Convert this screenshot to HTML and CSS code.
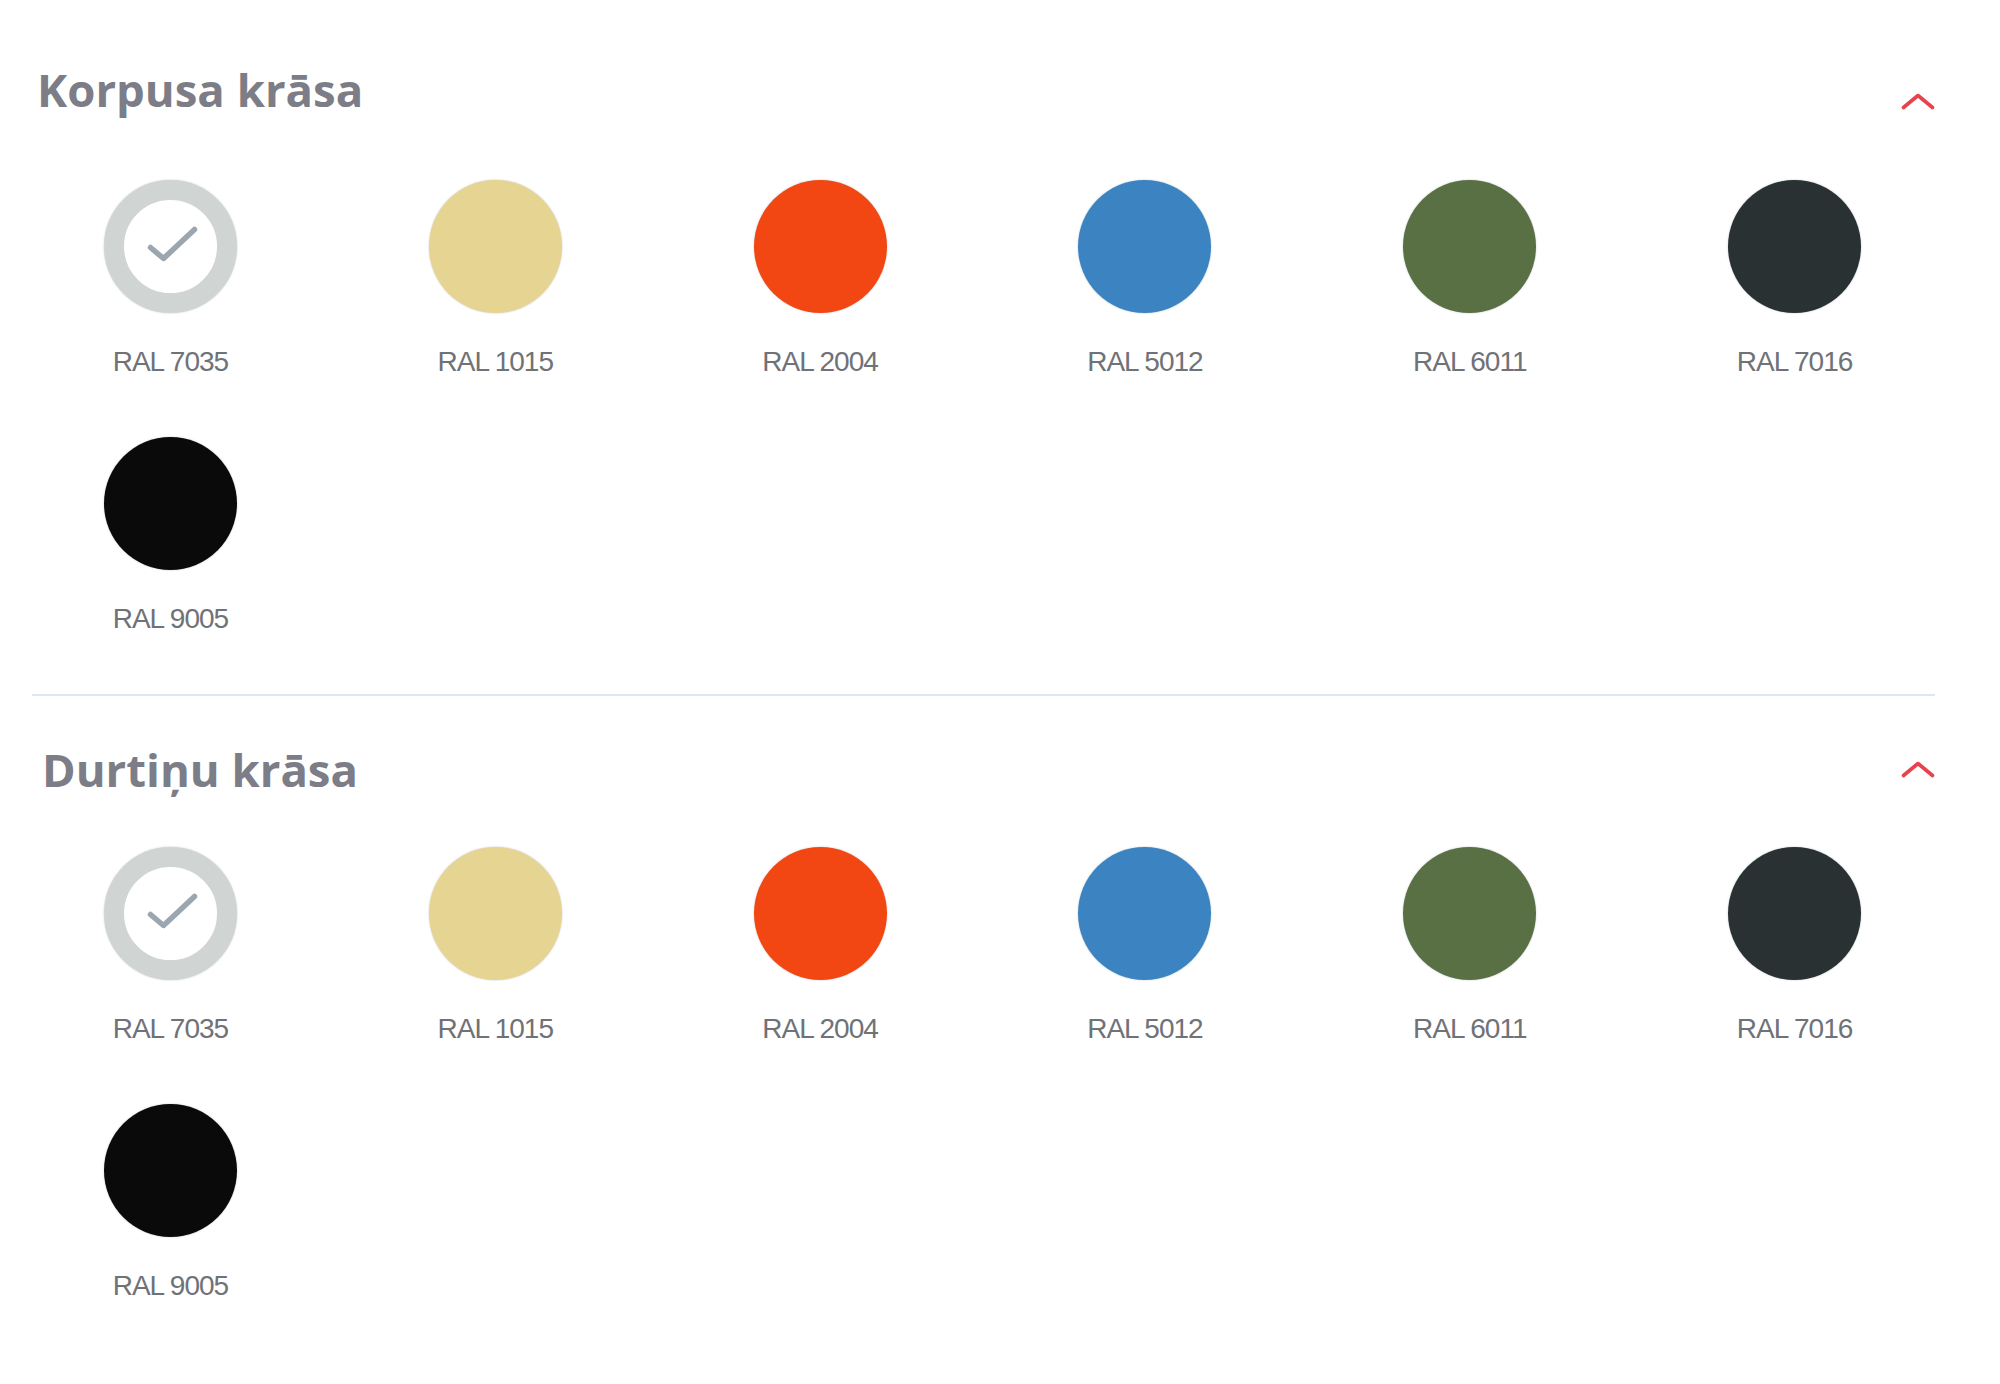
FILE: index.html
```html
<!DOCTYPE html>
<html lang="lv">
<head>
<meta charset="utf-8">
<title>Krāsu izvēle</title>
<link rel="stylesheet" href="styles.css">
</head>
<body>
<div class="panel">
  <section class="group group--body">
    <header class="group-head">
      <h2 class="group-title">Korpusa krāsa</h2>
      <button class="toggle toggle--low" type="button" aria-label="Sakļaut">
        <svg width="34" height="17" viewBox="0 0 34 17"><polyline points="2.5,14.5 17,2.5 31.5,14.5" fill="none" stroke="#e8424c" stroke-width="3.6" stroke-linecap="round" stroke-linejoin="round"/></svg>
      </button>
    </header>
    <div class="swatches">
      <div class="swatch">
        <span class="dot dot--selected">
          <svg width="93" height="93" viewBox="0 0 93 93"><polyline points="26.5,47.5 39.5,58.5 70.5,29.5" fill="none" stroke="#9ba6b0" stroke-width="5.5" stroke-linecap="round" stroke-linejoin="round"/></svg>
        </span>
        <span class="name">RAL 7035</span>
      </div>
      <div class="swatch"><span class="dot ral-1015"></span><span class="name">RAL 1015</span></div>
      <div class="swatch"><span class="dot ral-2004"></span><span class="name">RAL 2004</span></div>
      <div class="swatch"><span class="dot ral-5012"></span><span class="name">RAL 5012</span></div>
      <div class="swatch"><span class="dot ral-6011"></span><span class="name">RAL 6011</span></div>
      <div class="swatch"><span class="dot ral-7016"></span><span class="name">RAL 7016</span></div>
      <div class="swatch"><span class="dot ral-9005"></span><span class="name">RAL 9005</span></div>
    </div>
  </section>

  <section class="group group--doors">
    <header class="group-head">
      <h2 class="group-title">Durtiņu krāsa</h2>
      <button class="toggle" type="button" aria-label="Sakļaut">
        <svg width="34" height="17" viewBox="0 0 34 17"><polyline points="2.5,14.5 17,2.5 31.5,14.5" fill="none" stroke="#e8424c" stroke-width="3.6" stroke-linecap="round" stroke-linejoin="round"/></svg>
      </button>
    </header>
    <div class="swatches">
      <div class="swatch">
        <span class="dot dot--selected">
          <svg width="93" height="93" viewBox="0 0 93 93"><polyline points="26.5,47.5 39.5,58.5 70.5,29.5" fill="none" stroke="#9ba6b0" stroke-width="5.5" stroke-linecap="round" stroke-linejoin="round"/></svg>
        </span>
        <span class="name">RAL 7035</span>
      </div>
      <div class="swatch"><span class="dot ral-1015"></span><span class="name">RAL 1015</span></div>
      <div class="swatch"><span class="dot ral-2004"></span><span class="name">RAL 2004</span></div>
      <div class="swatch"><span class="dot ral-5012"></span><span class="name">RAL 5012</span></div>
      <div class="swatch"><span class="dot ral-6011"></span><span class="name">RAL 6011</span></div>
      <div class="swatch"><span class="dot ral-7016"></span><span class="name">RAL 7016</span></div>
      <div class="swatch"><span class="dot ral-9005"></span><span class="name">RAL 9005</span></div>
    </div>
  </section>
</div>
</body>
</html>
```

FILE: styles.css
```css
* {
  box-sizing: border-box;
}

html,
body {
  margin: 0;
  background: #ffffff;
}

body {
  font-family: "Open Sans", "Liberation Sans", sans-serif;
}

.panel {
  width: 1903px;
  margin-left: 32px;
  padding-top: 59px;
}

/* one colour group: heading + grid of swatches */
.group--body {
  padding-bottom: 60px;
  border-bottom: 2px solid #e0e7ec;
}

.group--doors {
  padding-top: 43px;
}

.group-head {
  display: flex;
  align-items: center;
  justify-content: space-between;
  height: 60px;
  padding-left: 5px;
}

.group--doors .group-head {
  padding-left: 10px;
}

.group-title {
  margin: 0;
  font-family: "Open Sans", sans-serif;
  font-weight: 700;
  font-size: 45.5px;
  line-height: 60px;
  color: #7c7d86;
}

.toggle {
  display: flex;
  padding: 0;
  border: 0;
  background: none;
  cursor: pointer;
}

.toggle--low {
  margin-top: 24px;
}

.swatches {
  display: grid;
  grid-template-columns: repeat(6, 1fr);
  row-gap: 60px;
  width: 1949px;
  margin-left: -24px;
}

.group--body .swatches {
  margin-top: 61px;
}

.group--doors .swatches {
  margin-top: 48px;
}

.swatch {
  display: flex;
  flex-direction: column;
  align-items: center;
}

.dot {
  display: flex;
  align-items: center;
  justify-content: center;
  width: 133px;
  height: 133px;
  border-radius: 50%;
  box-shadow: 0 0 1.5px 0.5px rgba(60, 80, 90, 0.18);
}

.dot--selected {
  background: #ffffff;
  border: 20px solid #d0d5d4;
}

.name {
  margin-top: 34px;
  font-family: "Liberation Sans", Arial, sans-serif;
  font-size: 28px;
  line-height: 30px;
  letter-spacing: -1px;
  color: #6f7277;
}

.ral-1015 { background: #e6d592; }
.ral-2004 { background: #f24713; }
.ral-5012 { background: #3c84c1; }
.ral-6011 { background: #587044; }
.ral-7016 { background: #293133; }
.ral-9005 { background: #0a0a0a; }
```
